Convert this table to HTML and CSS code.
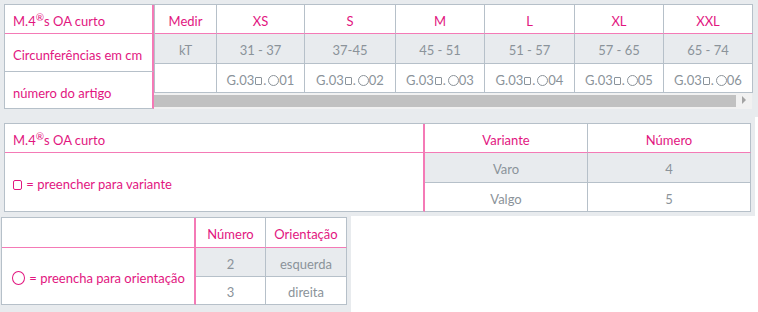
FILE: index.html
```html
<!DOCTYPE html>
<html lang="pt">
<head>
<meta charset="utf-8">
<title>M.4s OA curto – tabela de tamanhos</title>
<link rel="stylesheet" href="styles.css">
</head>
<body>

<div class="band band-top">
  <div class="chart">
    <table class="chart-labels">
      <tr class="r-head"><td>M.4<sup>®</sup>s OA curto</td></tr>
      <tr class="r-circ"><td>Circunferências em cm</td></tr>
      <tr class="r-art"><td>número do artigo</td></tr>
    </table>
    <div class="chart-scroll">
      <table class="chart-grid">
        <colgroup>
          <col class="c-medir"><col class="c-xs"><col class="c-s"><col class="c-m"><col class="c-l"><col class="c-xl"><col class="c-xxl">
        </colgroup>
        <tr class="g-head">
          <th>Medir</th><th>XS</th><th>S</th><th>M</th><th>L</th><th>XL</th><th>XXL</th>
        </tr>
        <tr class="g-circ">
          <td>kT</td><td>31 - 37</td><td>37-45</td><td>45 - 51</td><td>51 - 57</td><td>57 - 65</td><td>65 - 74</td>
        </tr>
        <tr class="g-art">
          <td></td>
          <td>G.03<span class="sq"></span>.<span class="ci"></span>01</td>
          <td>G.03<span class="sq"></span>.<span class="ci"></span>02</td>
          <td>G.03<span class="sq"></span>.<span class="ci"></span>03</td>
          <td>G.03<span class="sq"></span>.<span class="ci"></span>04</td>
          <td>G.03<span class="sq"></span>.<span class="ci"></span>05</td>
          <td>G.03<span class="sq"></span>.<span class="ci"></span>06</td>
        </tr>
      </table>
      <div class="hbar">
        <div class="hbar-thumb"></div>
        <div class="hbar-btn"></div>
      </div>
    </div>
  </div>
</div>

<div class="band band-mid">
  <table class="variants">
    <colgroup><col class="v-label"><col class="v-name"><col class="v-num"></colgroup>
    <tr class="v-head">
      <td class="lbl">M.4<sup>®</sup>s OA curto</td>
      <th>Variante</th>
      <th>Número</th>
    </tr>
    <tr class="v-shaded">
      <td class="lbl lbl-key" rowspan="2"><span class="key-sq"></span> = preencher para variante</td>
      <td>Varo</td>
      <td>4</td>
    </tr>
    <tr class="v-plain">
      <td>Valgo</td>
      <td>5</td>
    </tr>
  </table>
</div>

<div class="band band-low">
  <table class="orient">
    <colgroup><col class="o-label"><col class="o-num"><col class="o-name"></colgroup>
    <tr class="o-head">
      <td class="lbl"></td>
      <th>Número</th>
      <th>Orientação</th>
    </tr>
    <tr class="o-shaded">
      <td class="lbl lbl-key" rowspan="2"><span class="key-ci"></span> = preencha para orientação</td>
      <td>2</td>
      <td>esquerda</td>
    </tr>
    <tr class="o-plain">
      <td>3</td>
      <td>direita</td>
    </tr>
  </table>
</div>

</body>
</html>
```

FILE: styles.css
```css
* { box-sizing: border-box; }

body {
  margin: 0;
  background: #ffffff;
  font-family: Lato, "Open Sans", "DejaVu Sans", sans-serif;
  font-size: 13px;
  color: #8b939a;
}

/* grey bands behind each table */
.band { background: #e8ebee; }
.band-top { width: 758px; height: 117px; padding: 4px 0 0 4px; }
.band-mid { width: 755px; height: 99px; padding: 6px 0 0 4px; }
.band-low { width: 351px; height: 96px; padding: 1px 0 0 1px; }

table {
  border-collapse: separate;
  border-spacing: 0;
  table-layout: fixed;
  background: #ffffff;
  border-top: 1px solid #b6c0c9;
  border-left: 1px solid #b6c0c9;
}

td, th {
  padding: 3px 0 0 0;
  font-weight: normal;
  white-space: nowrap;
  border-right: 1px solid #b6c0c9;
  border-bottom: 1px solid #b6c0c9;
  text-align: center;
  vertical-align: middle;
}

th { color: #e2167f; }

sup {
  font-size: 10px;
  line-height: 0;
  vertical-align: 5px;
}

.chart { display: flex; width: 748px; }

.chart-labels { width: 150px; }
.chart-labels td {
  text-align: left;
  padding-left: 8px;
  color: #e2167f;
  border-right: 2px solid #f47ab6;
}
.r-head td { height: 29px; border-bottom-color: #f47ab6; }
.r-circ td { height: 38px; padding-top: 5px; }
.r-art td { height: 37px; padding-top: 6px; }

.chart-scroll { width: 598px; }
.chart-grid { width: 598px; }
.c-medir { width: 62px; }
.c-xs { width: 88px; }
.c-s { width: 91px; }
.c-m { width: 89px; }
.c-l { width: 90px; }
.c-xl { width: 89px; }
.c-xxl { width: 89px; }

.g-head th { height: 29px; border-bottom-color: #f47ab6; }
.g-circ td { height: 30px; background: #e8ebee; }
.g-art td { height: 29px; }

/* article-number placeholders */
.sq {
  display: inline-block;
  width: 7px;
  height: 8px;
  margin: 0 1px 0 1px;
  border: 1px solid #8b939a;
  border-radius: 1px;
}
.ci {
  display: inline-block;
  width: 11px;
  height: 11px;
  margin: 0 0 -1px 2px;
  border: 1px solid #8b939a;
  border-radius: 50%;
}

/* horizontal scrollbar */
.hbar {
  display: flex;
  height: 16px;
  background: #f1f1f1;
}
.hbar-thumb {
  flex: 1;
  height: 12px;
  margin-top: 2px;
  background: #c1c1c1;
}
.hbar-btn {
  width: 16px;
  height: 14px;
  display: flex;
  align-items: center;
  justify-content: center;
}
.hbar-btn::before {
  content: "";
  width: 0;
  height: 0;
  border-left: 4px solid #a3a3a3;
  border-top: 4px solid transparent;
  border-bottom: 4px solid transparent;
}

/* label cells in the key tables */
.lbl {
  text-align: left;
  color: #e2167f;
  border-right: 2px solid #f47ab6;
}
.lbl-key { padding-left: 8px; }

/* variant table */
.variants { width: 747px; }
.v-label { width: 420px; }
.v-name { width: 163px; }
.v-num { width: 163px; }
.v-head td, .v-head th { height: 29px; border-bottom-color: #f47ab6; }
.v-head .lbl { padding-left: 8px; }
.v-shaded td { height: 30px; }
.v-shaded td:not(.lbl) { background: #e8ebee; }
.v-plain td { height: 29px; }

.key-sq {
  display: inline-block;
  width: 9px;
  height: 10px;
  margin-right: 1px;
  border: 1px solid #e2167f;
  border-radius: 2px;
  vertical-align: -1px;
}

/* orientation table */
.orient { width: 346px; }
.o-label { width: 194px; }
.o-num { width: 70px; }
.o-name { width: 81px; }
.o-head td, .o-head th { height: 30px; border-bottom-color: #f47ab6; }
.o-shaded td { height: 29px; }
.o-shaded td:not(.lbl) { background: #e8ebee; }
.o-plain td { height: 28px; }
.orient .lbl-key { padding-left: 10px; }

.key-ci {
  display: inline-block;
  width: 13px;
  height: 14px;
  margin-right: 1px;
  border: 1px solid #e2167f;
  border-radius: 50%;
  vertical-align: -2px;
}
```
